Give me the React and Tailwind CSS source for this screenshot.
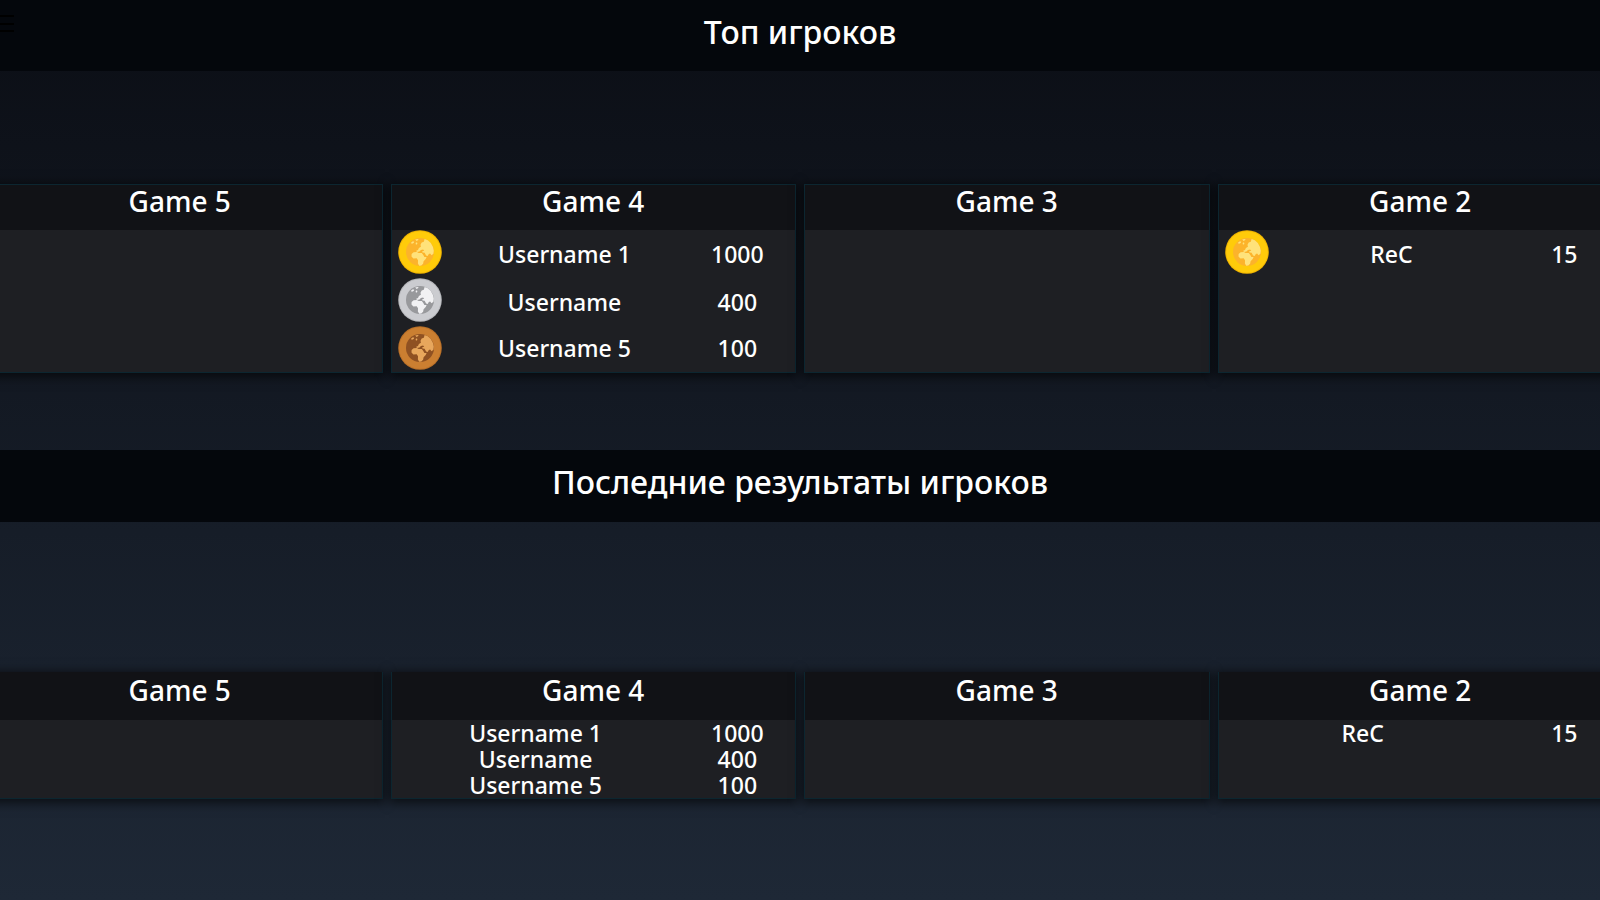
const games = [
  { name: "Game 5", players: [] },
  {
    name: "Game 4",
    players: [
      { name: "Username 1", score: 1000 },
      { name: "Username", score: 400 },
      { name: "Username 5", score: 100 },
    ],
  },
  { name: "Game 3", players: [] },
  { name: "Game 2", players: [{ name: "ReC", score: 15 }] },
];

const medals = [
  { label: "Gold", edge: "#f0b400", rim: "#ffcb0a", sea: "#fcb32b", land: "#ffe27a" },
  { label: "Silver", edge: "#b4b5b9", rim: "#cbccd0", sea: "#98999c", land: "#f1f1f3" },
  { label: "Bronze", edge: "#b86f28", rim: "#cb7f31", sea: "#8f5122", land: "#e8a75c" },
];

function Medal({ place }) {
  const m = medals[place];
  return (
    <svg viewBox="0 0 44 44" className="mx-auto size-11" role="img" aria-label={m.label}>
      <circle cx="22" cy="22" r="21.8" fill={m.edge} />
      <circle cx="22" cy="22" r="20.8" fill={m.rim} />
      <circle cx="22" cy="22" r="14" fill={m.sea} />
      <g fill={m.land}>
        <path d="M26.6 9l3.2 1.3 3 2.8 2.2 4 .8 3.6-.4 3-1.8 1.5-1.5-1.6-1.3.5-1.1 2-1.6-.6-1.5-2.7-2.1-.3-.3-1.2 2-.6-1.1-1.1-2.2.5-1.4 1.5-2.6.4-.7-1.2 1.8-.9.9-2 2-1.1-.4-2 1.2-2.3 2.1-.8z" />
        <path d="M13.6 24l2-1.7 3.4-.4 1.6 1.1 3.2.1 1.5 1.9 1.1 2 2.2.1-.9 2-2.1 2.1-.5 2.5-1.8 1.8-2.1.3-1.3-2.4.1-3.1-1.3-2-3.3.1-1.9-1.9z" />
        <path d="M12.8 13l1.6-1.4 1.8-.2-.5 1.5-1.7.9zM17.2 9.5l2.6-.6.9.8-2.1 1.4zM17.6 13l1.4-.7.4 1.7-1.4.8z" />
      </g>
    </svg>
  );
}

function Title({ as: Tag, children }) {
  return (
    <Tag className="flex-1 text-center text-[32px] leading-[63px] font-medium">{children}</Tag>
  );
}

function TopCard({ game }) {
  return (
    <article className="border border-[#0c2630] bg-[#1e1f23] shadow-[0_2px_10px_2px_rgba(0,0,0,0.6)]">
      <h3 className="h-[45px] bg-[#111216] text-center text-[28px] leading-8 font-medium">
        {game.name}
      </h3>
      <div className="min-h-[142px]">
        <table className="w-full table-fixed text-center text-[23px] leading-7 font-medium">
          <colgroup>
            <col className="w-1/7" />
            <col className="w-4/7" />
            <col className="w-2/7" />
          </colgroup>
          <tbody>
            {game.players.map((p, i) => (
              <tr key={p.name} className="group">
                <td className="p-0 pb-1 group-nth-3:pb-0">
                  <Medal place={i} />
                </td>
                <td className="p-0">{p.name}</td>
                <td className="p-0">{p.score}</td>
              </tr>
            ))}
          </tbody>
        </table>
      </div>
    </article>
  );
}

function RecentCard({ game }) {
  return (
    <article className="border-x border-b border-[#0c2630] bg-[#1e1f23] shadow-[0_2px_10px_2px_rgba(0,0,0,0.6)]">
      <h3 className="h-12 bg-[#111216] text-center text-[28px] leading-9 font-medium">
        {game.name}
      </h3>
      <div className="min-h-[78px]">
        <table className="w-full table-fixed text-center text-[23px] leading-[26px] font-medium">
          <colgroup>
            <col className="w-5/7" />
            <col className="w-2/7" />
          </colgroup>
          <tbody>
            {game.players.map((p) => (
              <tr key={p.name}>
                <td className="p-0">{p.name}</td>
                <td className="p-0">{p.score}</td>
              </tr>
            ))}
          </tbody>
        </table>
      </div>
    </article>
  );
}

export default function App() {
  return (
    <div className="min-h-screen overflow-hidden bg-linear-to-b from-[#0b0e15] to-[#1e2836] font-['Noto_Sans',sans-serif] text-white">
      <header className="relative flex h-[71px] bg-[#04070c]">
        <button type="button" aria-label="Menu" className="absolute top-3 left-0 text-black">
          <svg viewBox="0 0 14 24" className="h-6 w-[14px]" stroke="currentColor" strokeWidth="2">
            <path d="M0 4h14M0 12h14M0 19h14" />
          </svg>
        </button>
        <Title as="h1">Топ игроков</Title>
      </header>
      <section className="-mx-[23px] grid grid-cols-4 gap-2 pt-[113px] pb-[77px]">
        {games.map((g) => (
          <TopCard key={g.name} game={g} />
        ))}
      </section>
      <div className="flex h-[72px] bg-[#04070c]">
        <Title as="h2">Последние результаты игроков</Title>
      </div>
      <section className="-mx-[23px] grid grid-cols-4 gap-2 pt-[150px] pb-[101px]">
        {games.map((g) => (
          <RecentCard key={g.name} game={g} />
        ))}
      </section>
    </div>
  );
}
